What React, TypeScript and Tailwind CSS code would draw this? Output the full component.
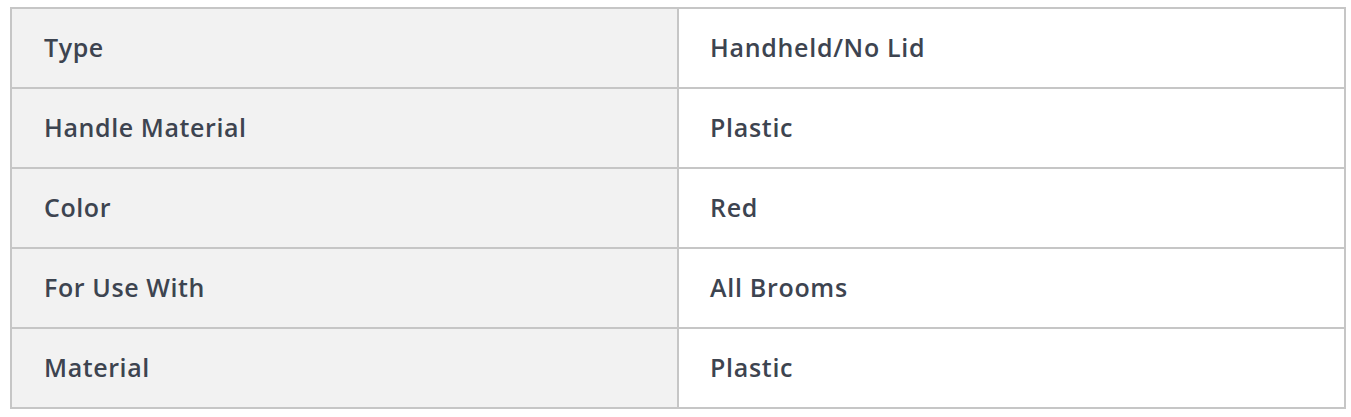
import React from 'react';

const rows: [string, string][] = [
  ['Type', 'Handheld/No Lid'],
  ['Handle Material', 'Plastic'],
  ['Color', 'Red'],
  ['For Use With', 'All Brooms'],
  ['Material', 'Plastic'],
];

export default function App() {
  return (
    <div className="bg-white w-[1351px] h-[417px] pt-[7px] pl-[10px]" style={{ fontFamily: '"Open Sans", "Noto Sans", sans-serif' }}>
      <div className="w-[1336px] border-2 border-[#c6c6c6]">
        {rows.map(([label, value], i) => (
          <div
            key={label}
            className={`flex ${i < rows.length - 1 ? 'h-[80px] border-b-2 border-[#c6c6c6]' : 'h-[78px]'}`}
          >
            <div className="w-[667px] bg-[#f2f2f2] border-r-2 border-[#c6c6c6] flex items-center pl-[32px] text-[25px] tracking-[0.6px] font-semibold text-[#3d4450]">
              {label}
            </div>
            <div className="flex-1 flex items-center pl-[31px] text-[25px] tracking-[0.7px] font-semibold text-[#3d4450]">
              {value}
            </div>
          </div>
        ))}
      </div>
    </div>
  );
}
